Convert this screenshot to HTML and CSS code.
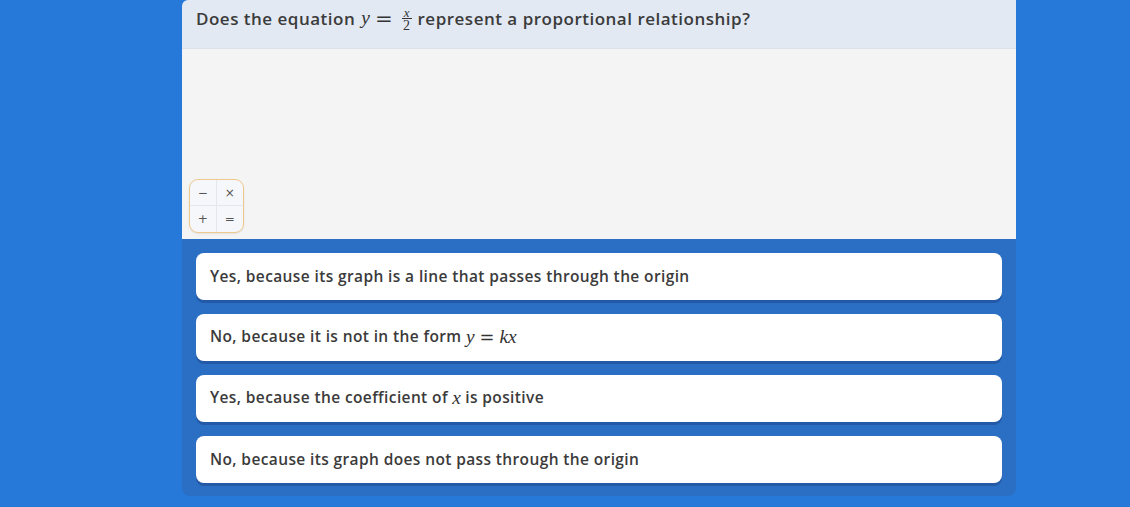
FILE: index.html
```html
<!DOCTYPE html>
<html>
<head>
<meta charset="utf-8">
<link rel="stylesheet" href="styles.css">
</head>
<body>
<div class="page">
  <div class="card">
    <div class="question">
      <span>Does the equation</span>
      <span class="math"><i>y</i><span class="eq">=</span><span class="frac"><i class="num">x</i><span class="den">2</span></span></span>
      <span>represent a proportional relationship?</span>
    </div>
    <div class="work">
      <div class="calc">
        <span class="key">&minus;</span><span class="key">&times;</span>
        <span class="key">+</span><span class="key">=</span>
      </div>
    </div>
    <div class="answers">
      <div class="answer"><span>Yes, because its graph is a line that passes through the origin</span></div>
      <div class="answer"><span>No, because it is not in the form <span class="math"><i>y</i><span class="eq">=</span><i>kx</i></span></span></div>
      <div class="answer"><span>Yes, because the coefficient of <span class="math"><i>x</i></span> is positive</span></div>
      <div class="answer"><span>No, because its graph does not pass through the origin</span></div>
    </div>
  </div>
</div>
</body>
</html>
```
FILE: styles.css
```css
html, body {
  margin: 0;
  padding: 0;
  background: #2679d9;
  height: 100%;
  overflow: hidden;
}
.page {
  display: flex;
  justify-content: flex-start;
  padding-left: 182px;
  font-family: "Open Sans", "Noto Sans", sans-serif;
  color: #3b3b3b;
}
.card {
  width: 834px;
  display: flex;
  flex-direction: column;
}
.question {
  background: #e2e9f3;
  height: 49px;
  border-bottom: 1px solid #dde2e8;
  border-top-left-radius: 6px;
  display: flex;
  align-items: center;
  gap: 6px;
  padding: 0 14px;
  font-size: 17px;
  font-weight: 600;
  letter-spacing: 0.5px;
  box-sizing: border-box;
  padding-bottom: 12px;
}
.math {
  font-family: "Liberation Serif", serif;
  font-weight: normal;
  display: inline-flex;
  align-items: center;
  color: #333;
  letter-spacing: 0;
}
.math i {
  font-family: "Liberation Serif", serif;
  font-size: 1.15em;
}
.eq {
  font-family: "DejaVu Serif", serif;
  margin: 0 6px;
  font-size: 1.05em;
}
.question .eq { margin: 0 8px 0 5px; font-size: 1.25em; }
.frac {
  display: inline-flex;
  flex-direction: column;
  align-items: center;
  margin-left: 1px;
  margin-top: 2px;
}
.frac .num {
  font-size: 13px;
  border-bottom: 1px solid #333;
  padding: 0 2px;
  line-height: 11px;
}
.frac .den {
  font-family: "Liberation Serif", serif;
  font-size: 14px;
  line-height: 13px;
}
.work {
  background: #f4f4f4;
  height: 190px;
  display: flex;
  align-items: flex-end;
  padding: 0 0 6px 7px;
  box-sizing: border-box;
}
.calc {
  width: 55px;
  height: 54px;
  box-sizing: border-box;
  border: 1.5px solid #efc98c;
  border-radius: 9px;
  background: #f6f7fa;
  display: grid;
  grid-template-columns: 1fr 1fr;
  grid-template-rows: 1fr 1fr;
  overflow: hidden;
  box-shadow: 0 1px 2px rgba(0,0,0,0.08);
}
.key {
  display: flex;
  align-items: center;
  justify-content: center;
  font-family: "DejaVu Sans", sans-serif;
  font-size: 12px;
  color: #555;
  border-color: #e3e7ee;
  border-style: solid;
  border-width: 0;
}
.key:nth-child(1) { border-right-width: 1px; border-bottom-width: 1px; }
.key:nth-child(2) { border-bottom-width: 1px; }
.key:nth-child(3) { border-right-width: 1px; }
.answers {
  background: #2b6fc5;
  border-radius: 0 0 8px 8px;
  padding: 14px 14px 13px;
  display: flex;
  flex-direction: column;
  gap: 14px;
}
.answer {
  background: #fff;
  border-radius: 8px;
  height: 47px;
  display: flex;
  align-items: center;
  padding: 0 14px 2px;
  box-sizing: border-box;
  font-size: 15.5px;
  font-weight: 600;
  letter-spacing: 0.38px;
  color: #3b3b3b;
  box-shadow: 0 3px 0 rgba(20,50,110,0.35);
}
.answer .math { vertical-align: -1px; }
.answer .math i { font-size: 1.25em; }
.answer .eq { font-size: 1.15em; margin: 0 5px; }
```
